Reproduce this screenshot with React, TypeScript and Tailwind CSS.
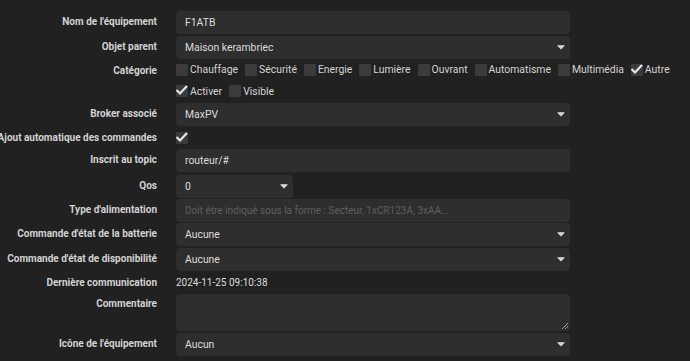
import React from "react";

const font = { fontFamily: "Roboto, 'Liberation Sans', sans-serif" };

function Caret() {
  return (
    <svg width="8" height="5" viewBox="0 0 8 5" className="shrink-0">
      <rect x="0.5" y="0" width="7" height="1" fill="#b5b5b5" />
      <path d="M0.5 1 L7.5 1 L4 4.5 Z" fill="#d6d6d6" />
    </svg>
  );
}

function Check() {
  return (
    <svg width="13" height="12" viewBox="0 0 13 12" className="absolute left-[-1px] top-[-1px]">
      <path d="M1.5 6 L5 9.5 L12 2" stroke="#e6e6e6" strokeWidth="2.2" fill="none" />
    </svg>
  );
}

function Box({ checked }: { checked?: boolean }) {
  return (
    <span className="relative inline-block w-[12px] h-[12px] bg-[#3b3b3b] rounded-[1px] shrink-0">
      {checked && <Check />}
    </span>
  );
}

function Cb({ label, checked }: { label: string; checked?: boolean }) {
  return (
    <span className="flex items-center gap-[2px] mr-[7px]">
      <Box checked={checked} />
      <span className="text-[10.4px] text-[#d4d4d4]">{label}</span>
    </span>
  );
}

function Label({ children, pt = "pt-[4px]" }: { children: React.ReactNode; pt?: string }) {
  return (
    <div className={`w-[157px] shrink-0 flex justify-end ${pt}`}>
      <span className="whitespace-nowrap text-[10px] leading-[13px] font-bold text-[#d2d2d2]">{children}</span>
    </div>
  );
}

function Field({ children, w = "w-[394px]" }: { children?: React.ReactNode; w?: string }) {
  return (
    <div className={`${w} h-[23px] bg-[#2e2e2e] rounded-[4px] flex items-center pl-[9px] pr-[9px] text-[10.4px] text-[#dcdcdc]`}>
      {children}
    </div>
  );
}

function Select({ value, w = "w-[394px]" }: { value: string; w?: string }) {
  return (
    <div className={`${w} h-[23px] bg-[#2e2e2e] rounded-[4px] flex items-center justify-between pl-[9px] pr-[5px] text-[10.4px] text-[#dcdcdc]`}>
      <span>{value}</span>
      <Caret />
    </div>
  );
}

function Row({ children, cls = "" }: { children: React.ReactNode; cls?: string }) {
  return <div className={`flex gap-[19px] ${cls}`}>{children}</div>;
}

export default function App() {
  return (
    <div className="w-[690px] h-[361px] bg-[#212121] overflow-hidden pt-[11px]" style={font}>
      <Row cls="mb-[2px]">
        <Label>Nom de l'équipement</Label>
        <Field>F1ATB</Field>
      </Row>
      <Row>
        <Label>Objet parent</Label>
        <Select value="Maison kerambriec" />
      </Row>
      <Row cls="h-[22px] items-center">
        <Label pt="pt-0">Catégorie</Label>
        <div className="flex items-center">
          <Cb label="Chauffage" />
          <Cb label="Sécurité" />
          <Cb label="Energie" />
          <Cb label="Lumière" />
          <Cb label="Ouvrant" />
          <Cb label="Automatisme" />
          <Cb label="Multimédia" />
          <Cb label="Autre" checked />
        </div>
      </Row>
      <Row cls="h-[21px] items-center mb-[1px]">
        <div className="w-[157px] shrink-0" />
        <div className="flex items-center">
          <Cb label="Activer" checked />
          <Cb label="Visible" />
        </div>
      </Row>
      <Row>
        <Label>Broker associé</Label>
        <Select value="MaxPV" />
      </Row>
      <Row cls="h-[23px] items-center">
        <Label pt="pt-0">Ajout automatique des commandes</Label>
        <Box checked />
      </Row>
      <Row cls="mb-[3px]">
        <Label>Inscrit au topic</Label>
        <Field>routeur/#</Field>
      </Row>
      <Row cls="mb-[1px]">
        <Label>Qos</Label>
        <Select value="0" w="w-[117px]" />
      </Row>
      <Row cls="mb-[1px]">
        <Label>Type d'alimentation</Label>
        <Field>
          <span className="text-[10px] text-[#5f5f5f]">Doit être indiqué sous la forme : Secteur, 1xCR123A, 3xAA...</span>
        </Field>
      </Row>
      <Row cls="mb-[2px]">
        <Label>Commande d'état de la batterie</Label>
        <Select value="Aucune" />
      </Row>
      <Row>
        <Label>Commande d'état de disponibilité</Label>
        <Select value="Aucune" />
      </Row>
      <Row cls="h-[23px] items-center">
        <Label pt="pt-0">Dernière communication</Label>
        <span className="text-[10px] text-[#dcdcdc]">2024-11-25 09:10:38</span>
      </Row>
      <Row cls="mb-[2px]">
        <Label pt="pt-[3px]">Commentaire</Label>
        <div className="relative w-[394px] h-[37px] bg-[#2e2e2e] rounded-[4px]">
          <svg width="8" height="8" viewBox="0 0 8 8" className="absolute right-[1px] bottom-[1px]">
            <path d="M7 1 L1 7 M7 4 L4 7" stroke="#9a9a9a" strokeWidth="1" />
          </svg>
        </div>
      </Row>
      <Row>
        <Label>Icône de l'équipement</Label>
        <Select value="Aucun" />
      </Row>
    </div>
  );
}
